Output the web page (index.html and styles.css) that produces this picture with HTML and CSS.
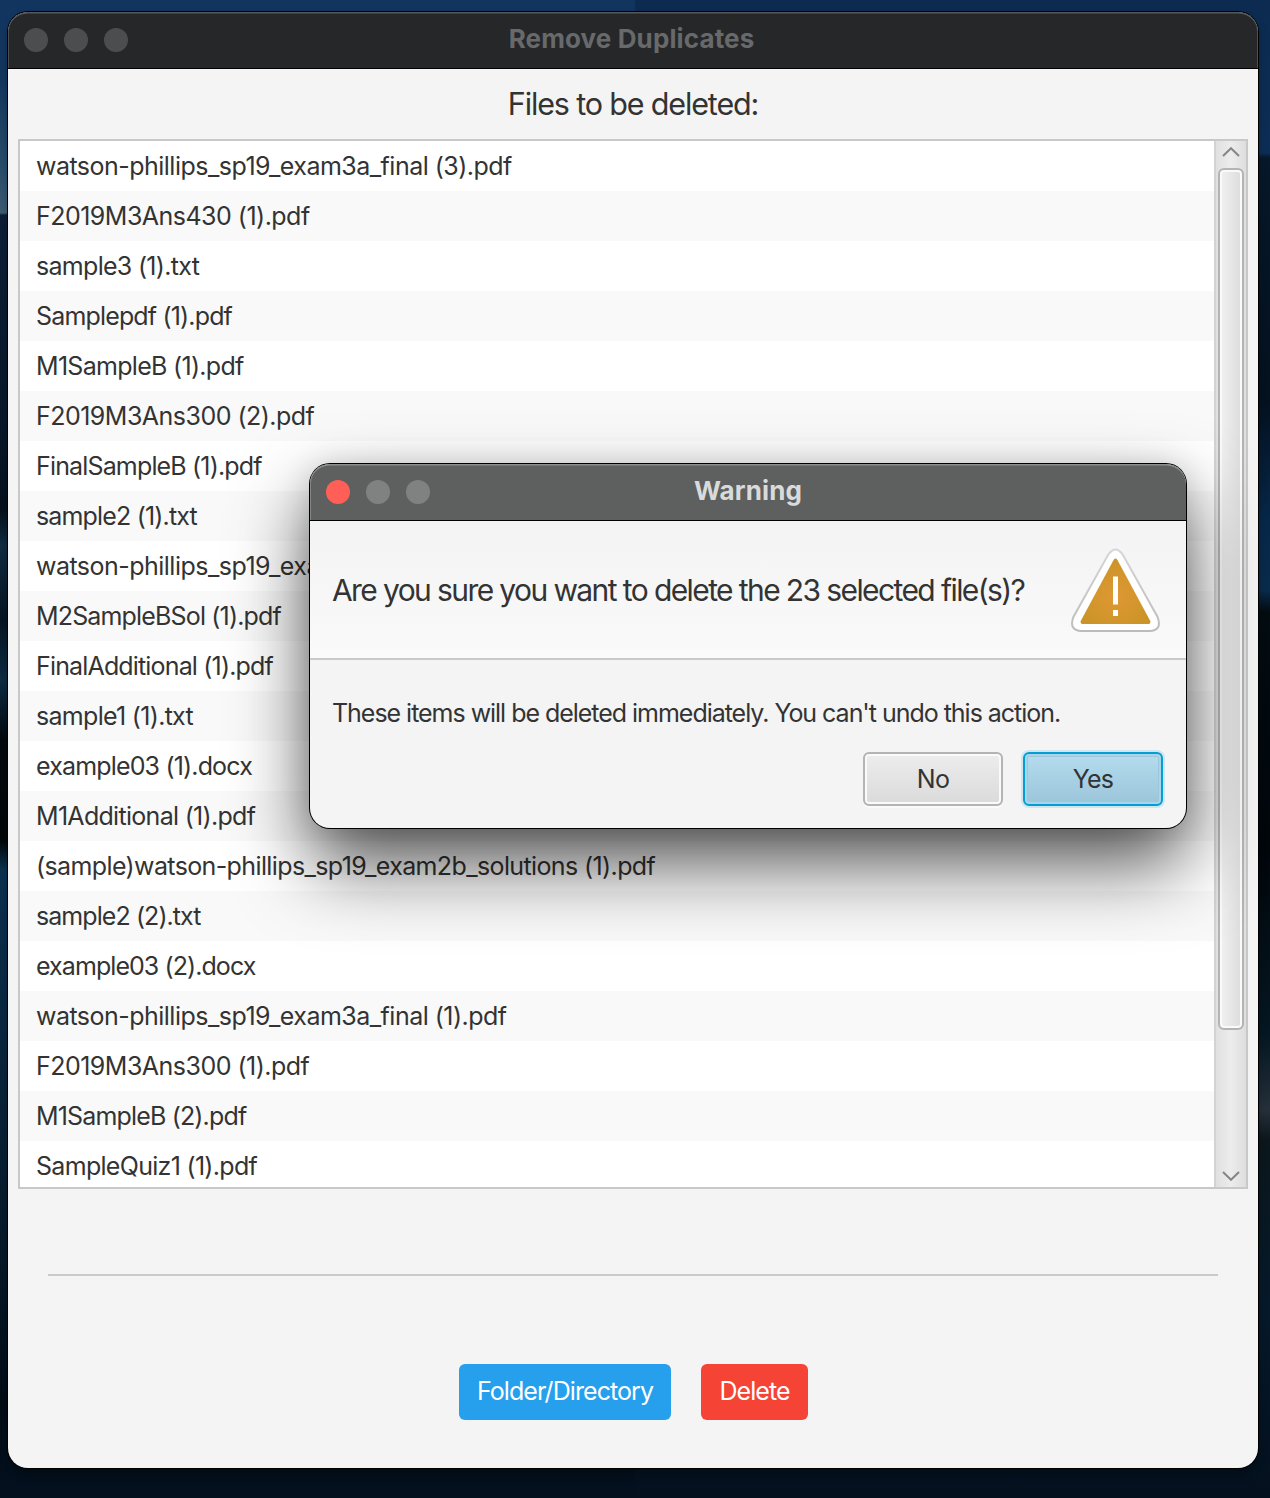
FILE: index.html
```html
<!DOCTYPE html>
<html lang="en">
<head>
<meta charset="utf-8">
<title>Remove Duplicates</title>
<link rel="stylesheet" href="styles.css">
</head>
<body>
<main class="window">
  <header class="titlebar">
    <div class="lights"><span class="light"></span><span class="light"></span><span class="light"></span></div>
    <h1 class="window-title"><span>Remove Duplicates</span></h1>
  </header>
  <h2 class="heading"><span>Files to be deleted:</span></h2>
  <section class="list-view">
    <ul class="rows">
      <li class="looser"><span>watson-phillips_sp19_exam3a_final (3).pdf</span></li>
      <li class="looser"><span>F2019M3Ans430 (1).pdf</span></li>
      <li class="loose"><span>sample3 (1).txt</span></li>
      <li><span>Samplepdf (1).pdf</span></li>
      <li class="loose"><span>M1SampleB (1).pdf</span></li>
      <li class="looser"><span>F2019M3Ans300 (2).pdf</span></li>
      <li><span>FinalSampleB (1).pdf</span></li>
      <li><span>sample2 (1).txt</span></li>
      <li class="looser"><span>watson-phillips_sp19_exam3a_final (2).pdf</span></li>
      <li><span>M2SampleBSol (1).pdf</span></li>
      <li><span>FinalAdditional (1).pdf</span></li>
      <li class="loose"><span>sample1 (1).txt</span></li>
      <li><span>example03 (1).docx</span></li>
      <li class="loose"><span>M1Additional (1).pdf</span></li>
      <li class="long"><span>(sample)watson-phillips_sp19_exam2b_solutions (1).pdf</span></li>
      <li class="tight"><span>sample2 (2).txt</span></li>
      <li class="tight"><span>example03 (2).docx</span></li>
      <li class="looser"><span>watson-phillips_sp19_exam3a_final (1).pdf</span></li>
      <li class="looser"><span>F2019M3Ans300 (1).pdf</span></li>
      <li><span>M1SampleB (2).pdf</span></li>
      <li class="loose"><span>SampleQuiz1 (1).pdf</span></li>
    </ul>
    <div class="scrollbar">
      <svg class="arrow" width="18" height="10" viewBox="0 0 18 10"><path d="M1 9 9 1.2 17 9" /></svg>
      <div class="thumb"></div>
      <svg class="arrow arrow-down" width="18" height="10" viewBox="0 0 18 10"><path d="M1 1 9 8.8 17 1" /></svg>
    </div>
  </section>
  <hr class="separator">
  <footer class="actions">
    <button class="action folder">Folder/Directory</button>
    <button class="action delete">Delete</button>
  </footer>
</main>

<div class="dialog" role="alertdialog">
  <header class="titlebar dialog-titlebar">
    <div class="lights"><span class="light close"></span><span class="light"></span><span class="light"></span></div>
    <h2 class="window-title"><span>Warning</span></h2>
  </header>
  <div class="dialog-header">
    <p class="question">Are you sure you want to delete the 23 selected file(s)?</p>
    <svg class="warning" width="92" height="86" viewBox="0 0 92 86">
      <defs>
        <radialGradient id="amber" cx="50%" cy="58%" r="55%"><stop offset="0" stop-color="#df9833"/><stop offset="1" stop-color="#cb9428"/></radialGradient>
        <linearGradient id="edge" x1="0" y1="0" x2="0" y2="1"><stop offset="0" stop-color="#d6d6d6"/><stop offset="1" stop-color="#bcbcbc"/></linearGradient>
      </defs>
      <path d="M38.3 6.5 Q45.5-3.7 52.7 6.5 L87.6 69 Q92.5 82.5 79.5 83 H11.5 Q-1.5 82.5 3.4 69Z" fill="#fff" stroke="url(#edge)" stroke-width="2"/>
      <path d="M43.7 11.8 Q45.5 9 47.3 11.8 L80.3 73 Q81 75.5 78.5 76 H12.5 Q10 75.5 10.7 73Z" fill="url(#amber)"/>
      <path d="M43 28.500h5v28h-5zM43 62h5v6h-5z" fill="#fff"/>
    </svg>
  </div>
  <div class="dialog-body">
    <p class="message">These items will be deleted immediately. You can't undo this action.</p>
    <div class="buttons">
      <button class="button">No</button>
      <button class="button default">Yes</button>
    </div>
  </div>
</div>
</body>
</html>
```
FILE: styles.css
```css
* { box-sizing: border-box; }

body {
  margin: 0;
  height: 1498px;
  padding: 12px 12px 30px 8px;
  overflow: hidden;
  font-family: Inter, "Liberation Sans", sans-serif;
  color: #333;
  background:
    linear-gradient(180deg, #0d2b50 0, #0c2d55 153px, #07182a 158px, #04111f 400px, #08284a 520px,
      #0a2c4c 590px, #040d12 612px, #02070c 850px, #051722 1035px, #25303a 1110px, #0b171c 1140px,
      #06192a 1300px, #04101e 1498px) right / 635px 100% no-repeat,
    linear-gradient(180deg, #11355f 0, #14375f 80px, #284d6b 165px, #3c5d73 213px, #0c1f38 215px,
      #08182c 420px, #05101c 510px, #0e2c43 545px, #061422 620px, #0c2b45 680px, #03090f 740px,
      #020709 840px, #0b3150 870px, #09263f 1050px, #06192a 1250px, #020c16 1400px, #03101e 1498px);
}

h1, h2, p, ul { margin: 0; padding: 0; }

.window {
  display: flex;
  flex-direction: column;
  height: 1456px;
  border-radius: 20px;
  overflow: hidden;
  background: #f4f4f4;
  box-shadow: 0 0 0 1px #000, 0 6px 10px rgba(0, 0, 0, .25);
}

.titlebar {
  display: grid;
  grid-template-columns: 120px 1fr 120px;
  align-items: center;
  flex: none;
  height: 57px;
  background: #262729;
  border-bottom: 1px solid #000;
  border-radius: 20px 20px 0 0;
  box-shadow: inset 0 2px 0 -0.5px #55585a, inset 1px 0 0 #4c4e50, inset -1px 0 0 #4c4e50;
}

.lights { display: flex; gap: 16px; padding-left: 16px; }
.light { width: 24px; height: 24px; border-radius: 50%; background: #4c4d4f; }

.window-title {
  padding: 0 3px 2px 0;
  text-align: center;
  font-size: 26px;
  line-height: 30px;
  font-weight: 700;
  letter-spacing: .12px;
  color: #68696b;
  white-space: nowrap;
}

.heading {
  flex: none;
  height: 70px;
  text-align: center;
  font-size: 30.5px;
  line-height: 70px;
  font-weight: 400;
  letter-spacing: -1.15px;
}

.list-view {
  display: flex;
  flex: none;
  height: 1050px;
  margin: 0 10px;
  border: 2px solid #c8c8c8;
  background: #fff;
}

.rows {
  flex: 1;
  height: 1046px;
  overflow: hidden;
  list-style: none;
}

.rows li {
  height: 50px;
  padding-left: 16px;
  font-size: 25px;
  line-height: 50px;
  letter-spacing: -.84px;
  white-space: nowrap;
}
.rows li:nth-child(even) { background: #f9f9f9; }
.rows .tight { letter-spacing: -.93px; }
.rows .loose { letter-spacing: -.7px; }
.rows .long { letter-spacing: -.62px; }
.rows .looser { letter-spacing: -.52px; }

.scrollbar {
  display: flex;
  flex-direction: column;
  align-items: center;
  width: 32px;
  padding: 6px 0;
  border-left: 2px solid #d3d3d3;
  background: linear-gradient(90deg, #e0e0e0, #ececec 50%, #dedede);
}
.arrow { flex: none; fill: none; stroke: #858585; stroke-width: 2; }
.arrow-down { margin-top: auto; }

.thumb {
  width: 26px;
  height: 862px;
  margin-top: 11px;
  border: 2px solid #b4b4b4;
  border-radius: 6px;
  background: linear-gradient(90deg, #f1f1f1, #dcdcdc);
  box-shadow: inset 0 0 0 2px #fafafa;
}

.separator {
  flex: none;
  width: 1170px;
  height: 2px;
  margin: 85px auto 0;
  border: 0;
  background: #cacaca;
}

.actions { display: flex; justify-content: center; gap: 30px; margin-top: 88px; }

.action {
  height: 56px;
  padding: 0 0 2px 1px;
  border: 0;
  border-radius: 6px;
  font: 400 25px Inter, "Liberation Sans", sans-serif;
  letter-spacing: -.93px;
  color: #fff;
}
.folder { width: 212px; background: #269fed; }
.delete { width: 107px; background: #f54336; }

/* The confirmation dialog floats above the main window. */
.dialog {
  position: absolute;
  left: 310px;
  top: 464px;
  display: flex;
  flex-direction: column;
  width: 876px;
  height: 364px;
  border-radius: 20px;
  background: #f4f4f4;
  box-shadow: 0 0 0 1px #000, 0 36px 76px rgba(0, 0, 0, .68), 0 0 30px rgba(0, 0, 0, .12);
}

.dialog-titlebar { background: #5e605f; box-shadow: inset 0 2px 0 -0.5px #8c8e8d, inset 1px 0 0 #858786; }
.dialog .light { background: #808281; }
.dialog .close { background: #ff5f57; }
.dialog .window-title { color: #d9dada; padding-right: 0; }

.dialog-header {
  display: flex;
  justify-content: space-between;
  height: 139px;
  padding: 27px 24px 0 22px;
  border-bottom: 2px solid #c9c9c9;
  background: linear-gradient(#f3f3f3, #fafafa);
}

.question {
  font-size: 30px;
  line-height: 85px;
  letter-spacing: -1.6px;
  white-space: nowrap;
}
.warning { flex: none; }

.dialog-body { display: flex; flex-direction: column; padding: 33px 23px 22px 22px; }
.message {
  font-size: 25px;
  line-height: 40px;
  letter-spacing: -1.03px;
  white-space: nowrap;
}

.buttons { display: flex; justify-content: flex-end; gap: 20px; margin-top: 19px; }
.button {
  width: 140px;
  height: 54px;
  padding: 0;
  border: 2px solid #b4b4b4;
  border-radius: 6px;
  background: linear-gradient(#ededed, #dadada);
  box-shadow: inset 0 0 0 2px #fafafa, 0 2px 0 #fafafa;
  font: 400 25px Inter, "Liberation Sans", sans-serif;
  letter-spacing: -.7px;
  color: #333;
}
.default {
  border-color: #039ed3;
  background: linear-gradient(#b5dcee, #9bc5da);
  box-shadow: inset 0 0 0 2px #a8d5e9, inset 0 0 0 3px #9cc8dc, 0 0 0 2px #cfe6ef;
}
```
